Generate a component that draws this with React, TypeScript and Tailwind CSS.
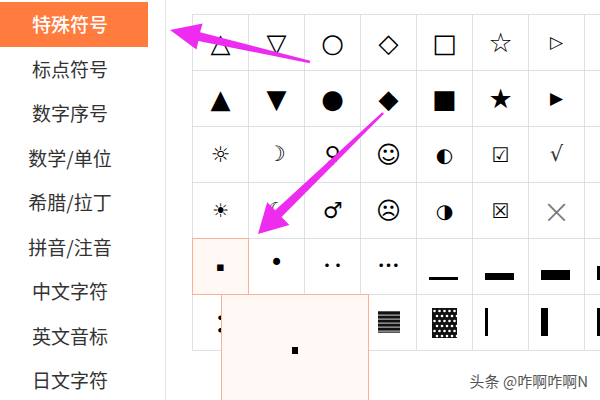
import React from 'react';

const menu = ['特殊符号', '标点符号', '数字序号', '数学/单位', '希腊/拉丁', '拼音/注音', '中文字符', '英文音标', '日文字符'];

type Cell = { ch?: string; cls?: string; bar?: 'h' | 'v'; size?: number; pat?: 'lines' | 'dots' };

// 6 rows x 8 cols, the 8th column is cut by the window edge
const rows: Cell[][] = [
  [
    { ch: '△', cls: 'text-[26px]' },
    { ch: '▽', cls: 'text-[26px]' },
    { ch: '○', cls: 'text-[26px]' },
    { ch: '◇', cls: 'text-[26px]' },
    { ch: '□', cls: 'text-[26px]' },
    { ch: '☆', cls: 'text-[27px]' },
    { ch: '▷', cls: 'text-[17px]' },
    { ch: '▷', cls: 'text-[17px]' },
  ],
  [
    { ch: '▲', cls: 'text-[26px]' },
    { ch: '▼', cls: 'text-[26px]' },
    { ch: '●', cls: 'text-[26px]' },
    { ch: '◆', cls: 'text-[26px]' },
    { ch: '■', cls: 'text-[26px]' },
    { ch: '★', cls: 'text-[27px]' },
    { ch: '▶', cls: 'text-[17px]' },
    { ch: '▶', cls: 'text-[17px]' },
  ],
  [
    { ch: '☼', cls: 'text-[22px]' },
    { ch: '☽', cls: 'text-[21px]' },
    { ch: '♀', cls: 'text-[22px]' },
    { ch: '☺', cls: 'text-[24px]' },
    { ch: '◐', cls: 'text-[20px]' },
    { ch: '☑', cls: 'text-[20px]' },
    { ch: '√', cls: 'text-[21px] text-[#333]' },
    { ch: '√', cls: 'text-[21px]' },
  ],
  [
    { ch: '☀', cls: 'text-[19px]' },
    { ch: '☾', cls: 'text-[21px]' },
    { ch: '♂', cls: 'text-[22px]' },
    { ch: '☹', cls: 'text-[24px]' },
    { ch: '◑', cls: 'text-[20px]' },
    { ch: '☒', cls: 'text-[20px]' },
    { ch: '×', cls: 'text-[34px] font-extralight text-[#777]' },
    { ch: '×', cls: 'text-[34px] font-extralight text-[#777]' },
  ],
  [
    { ch: '▪', cls: 'text-[13px]' },
    { ch: '•', cls: 'text-[24px] -mt-2' },
    { ch: '‥', cls: 'text-[22px] -mt-2 font-bold cjk' },
    { ch: '…', cls: 'text-[22px] -mt-2 font-bold cjk' },
    { bar: 'h', size: 3 },
    { bar: 'h', size: 7 },
    { bar: 'h', size: 10 },
    { bar: 'h', size: 14 },
  ],
  [
    { ch: '∶', cls: 'text-[26px] font-bold cjk' },
    { ch: '' },
    { ch: '' },
    { pat: 'lines' },
    { pat: 'dots' },
    { bar: 'v', size: 3 },
    { bar: 'v', size: 7 },
    { bar: 'v', size: 10 },
  ],
];

function Pattern({ kind }: { kind: 'lines' | 'dots' }) {
  if (kind === 'lines') {
    return (
      <svg width="22" height="22" viewBox="0 0 22 22" className="mt-[-2px]">
        <rect width="22" height="22" fill="#555" />
        {[1, 5, 9, 13, 17].map((y) => (
          <rect key={y} x="0" y={y} width="22" height="2.6" fill="#111" />
        ))}
        {[3.6, 7.6, 11.6, 15.6, 19.6].map((y) => (
          <rect key={y} x="0" y={y} width="22" height="1" fill="#aaa" />
        ))}
      </svg>
    );
  }
  const dots = [];
  for (let r = 0; r < 6; r++) {
    for (let c = 0; c < 5; c++) {
      dots.push(<circle key={r + '-' + c} cx={2.5 + c * 5 + (r % 2) * 2.5} cy={3 + r * 5} r="1.3" fill="#fff" />);
    }
  }
  return (
    <svg width="25" height="30" viewBox="0 0 25 30">
      <rect width="25" height="30" fill="#111" />
      {dots}
    </svg>
  );
}

function CellBody({ cell }: { cell: Cell }) {
  if (cell.bar === 'h') {
    return (
      <div className="absolute left-[12px] top-[13px] w-[29px] h-[28px] flex flex-col justify-end">
        <div className="bg-black w-full" style={{ height: cell.size }} />
      </div>
    );
  }
  if (cell.bar === 'v') {
    return (
      <div className="absolute left-[12px] top-[13px] w-[29px] h-[28px] flex">
        <div className="bg-black h-full" style={{ width: cell.size }} />
      </div>
    );
  }
  if (cell.pat) return <Pattern kind={cell.pat} />;
  const cjk = cell.cls?.includes('cjk');
  const colored = cell.cls?.includes('text-[#');
  return (
    <span
      className={
        'leading-none ' +
        (colored ? '' : 'text-black ') +
        (cjk ? "font-['Noto_Sans_CJK_SC',sans-serif] " : "font-['DejaVu_Sans',sans-serif] ") +
        (cell.cls ?? '')
      }
    >
      {cell.ch}
    </span>
  );
}

function Arrows() {
  return (
    <svg className="absolute inset-0 pointer-events-none" width="600" height="400" viewBox="0 0 600 400">
      <polygon
        points="310.3,60.8 200.1,32.2 202.6,23.4 170,30 196.4,49.6 198.4,41 309.7,63.2"
        fill="#ee2cf0"
      />
      <polygon
        points="384,113.8 281.5,217 289.4,225 258,234 267.2,202.3 275.2,210.3 382.2,112.2"
        fill="#ee2cf0"
      />
    </svg>
  );
}

export default function App() {
  return (
    <div className="relative w-[600px] h-[400px] overflow-hidden bg-white flex font-['Noto_Sans_CJK_SC',sans-serif]">
      {/* 左侧分类 */}
      <div className="w-[166px] h-full shrink-0 border-r border-[#e4e4e4] pt-[2px]">
        {menu.map((m, i) => (
          <div
            key={m}
            className={
              'w-[148px] h-[44.5px] flex items-center justify-center pr-2 text-[19px] ' +
              (i === 0 ? 'bg-[#ff7b3e] text-white font-medium' : 'text-[#333]')
            }
          >
            {m}
          </div>
        ))}
      </div>

      {/* 符号表 */}
      <div className="pl-[26px] pt-[14px] shrink-0">
        <div className="grid grid-cols-[repeat(8,56px)] border-l border-t border-[#dde0e5] w-[449px]">
          {rows.map((row, r) =>
            row.map((cell, c) => {
              const active = r === 4 && c === 0;
              return (
                <div
                  key={r + '-' + c}
                  className={
                    'relative h-[56px] border-r border-b border-[#dde0e5] flex items-center justify-center ' +
                    (active ? 'bg-[#fff8f5]' : '')
                  }
                >
                  {active && (
                    <div className="absolute -left-px -top-px w-[57px] h-[57px] border border-[#f7b397]" />
                  )}
                  <CellBody cell={cell} />
                </div>
              );
            })
          )}
        </div>
      </div>

      {/* 放大预览 */}
      <div className="absolute left-[221px] top-[294px] w-[148px] h-[120px] border border-[#f7b397] bg-[#fff8f5] flex justify-center pt-[52px]">
        <div className="w-[6px] h-[7px] bg-black" />
      </div>

      <Arrows />

      <div className="absolute right-[12px] top-[370px] text-[15px] text-[#555] font-['Noto_Sans_CJK_SC',sans-serif] [text-shadow:0_0_2px_#fff,0_0_2px_#fff]">
        头条 @咋啊咋啊N
      </div>
    </div>
  );
}
